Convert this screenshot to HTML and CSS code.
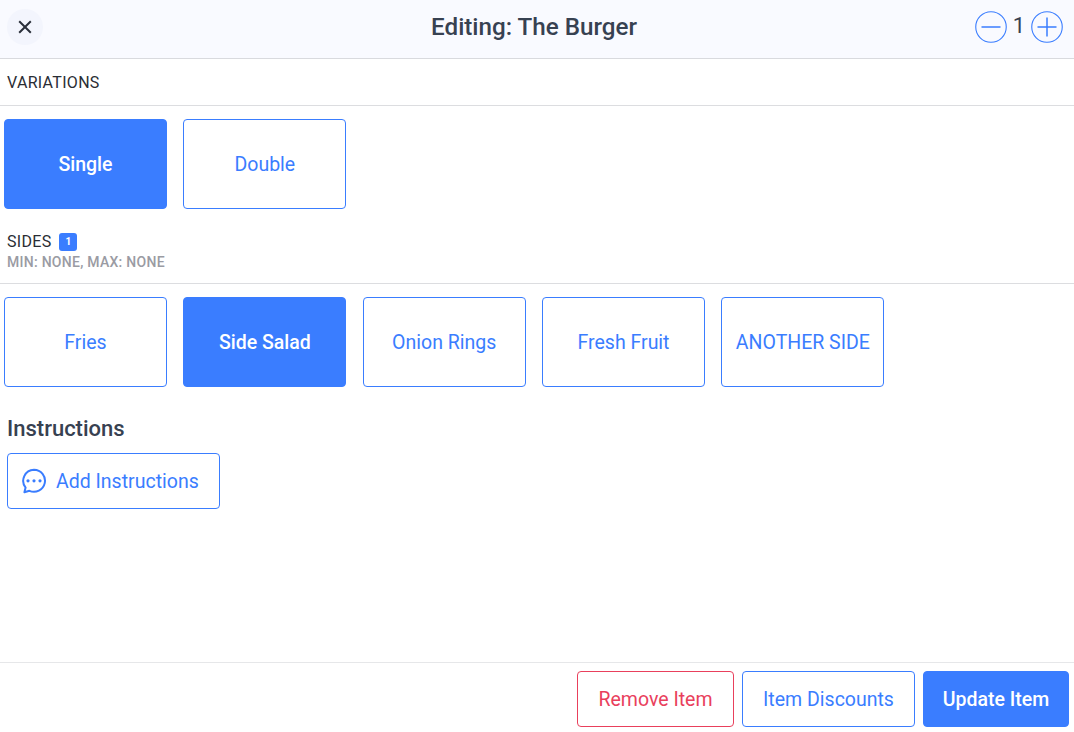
FILE: index.html
```html
<!DOCTYPE html>
<html lang="en">
<head>
    <meta charset="UTF-8">
    <meta name="viewport" content="width=device-width, initial-scale=1.0">
    <title>Editing: The Burger</title>
    <link rel="stylesheet" href="styles.css">
</head>
<body>
    <header class="top-bar">
        <button class="close-btn" aria-label="Close">
            <svg width="14" height="14" viewBox="0 0 14 14"><path d="M1.2 1.2l11.6 11.6M12.8 1.2l-11.6 11.6" fill="none" stroke="#2a2f3a" stroke-width="2"/></svg>
        </button>
        <h1 class="title">Editing: The Burger</h1>
        <div class="qty">
            <button class="qty-btn" aria-label="Decrease">
                <svg width="32" height="32" viewBox="0 0 32 32"><circle cx="16" cy="16" r="15.25" fill="none" stroke="#3a7dff" stroke-width="1.1"/><path d="M6.5 16h19" stroke="#3a7dff" stroke-width="1.5"/></svg>
            </button>
            <span class="qty-value">1</span>
            <button class="qty-btn" aria-label="Increase">
                <svg width="32" height="32" viewBox="0 0 32 32"><circle cx="16" cy="16" r="15.25" fill="none" stroke="#3a7dff" stroke-width="1.1"/><path d="M6.5 16h19M16 6.5v19" stroke="#3a7dff" stroke-width="1.5"/></svg>
            </button>
        </div>
    </header>

    <main class="content">
        <div class="group-head group-head-first">
            <div class="group-name">VARIATIONS</div>
        </div>
        <div class="options">
            <button class="btn option btn-solid">Single</button>
            <button class="btn option">Double</button>
        </div>

        <div class="group-head group-head-sides">
            <div class="group-name">SIDES <span class="badge">1</span></div>
            <div class="group-limits">MIN: NONE, MAX: NONE</div>
        </div>
        <div class="options">
            <button class="btn option">Fries</button>
            <button class="btn option btn-solid">Side Salad</button>
            <button class="btn option">Onion Rings</button>
            <button class="btn option">Fresh Fruit</button>
            <button class="btn option">ANOTHER SIDE</button>
        </div>

        <section class="instructions">
            <h2>Instructions</h2>
            <button class="btn add-btn">
                <svg width="26" height="26" viewBox="0 0 26 26"><path d="M13 1.8a11 11 0 1 1-4.6 21l-5 1.4 1.2-4.6A11 11 0 0 1 13 1.8z" fill="none" stroke="#3a7dff" stroke-width="2" stroke-linejoin="round"/><circle cx="7" cy="12.8" r="1.6" fill="#3a7dff"/><circle cx="13" cy="12.8" r="1.6" fill="#3a7dff"/><circle cx="19" cy="12.8" r="1.6" fill="#3a7dff"/></svg>
                Add Instructions
            </button>
        </section>
    </main>

    <footer class="actions">
        <button class="btn action btn-danger">Remove Item</button>
        <button class="btn action action-discounts">Item Discounts</button>
        <button class="btn action action-update btn-solid">Update Item</button>
    </footer>
</body>
</html>
```

FILE: styles.css
```css
* {
    box-sizing: border-box;
}
html, body {
    height: 100%;
}
body {
    margin: 0;
    height: 732px;
    overflow: hidden;
    display: flex;
    flex-direction: column;
    font-family: Roboto, Arial, sans-serif;
    background-color: #ffffff;
    color: #374151;
}
button {
    font-family: inherit;
    cursor: pointer;
}
.top-bar {
    height: 59px;
    flex: none;
    display: flex;
    align-items: center;
    justify-content: space-between;
    padding: 0 11px 5px 7px;
    background-color: #f9faff;
    border-bottom: 1px solid #d9dade;
    position: relative;
}
.close-btn {
    width: 36px;
    height: 36px;
    padding: 0;
    border: none;
    border-radius: 50%;
    background-color: #f3f5fd;
    display: flex;
    align-items: center;
    justify-content: center;
}
.title {
    position: absolute;
    left: 0;
    right: 6px;
    top: 12px;
    margin: 0;
    font-size: 24.2px;
    line-height: 30px;
    font-weight: 500;
    text-align: center;
}
.qty {
    display: flex;
    align-items: center;
}
.qty-btn {
    width: 32px;
    height: 32px;
    padding: 0;
    border: none;
    background: none;
    display: block;
}
.qty-btn svg {
    display: block;
}
.qty-value {
    width: 24px;
    text-align: center;
    font-size: 22px;
    margin-top: -2px;
}
.content {
    flex: 1;
}
.group-head {
    padding: 0 7px;
    border-bottom: 1px solid #dcdde0;
}
.group-head-first {
    height: 47px;
    padding-top: 14px;
}
.group-head-sides {
    height: 63px;
    margin-top: 12px;
    padding-top: 11px;
}
.group-name {
    font-size: 16px;
    line-height: 19px;
    letter-spacing: 0.3px;
    color: #2a2d34;
    display: flex;
    align-items: center;
    gap: 8px;
}
.badge {
    width: 18px;
    height: 18px;
    border-radius: 3px;
    background-color: #3a7dff;
    color: #ffffff;
    font-size: 10px;
    font-weight: 700;
    line-height: 18px;
    text-align: center;
}
.group-limits {
    font-size: 14px;
    line-height: 16px;
    letter-spacing: 0.27px;
    margin-top: 3px;
    font-weight: 500;
    color: #9a9ba3;
}
.options {
    display: flex;
    gap: 16.35px;
    padding: 13px 4px 0;
}
.btn {
    border: 1px solid #3a7dff;
    border-radius: 4px;
    background-color: #ffffff;
    color: #3a7dff;
    font-size: 19.5px;
}
.btn-solid {
    background-color: #3a7dff;
    color: #ffffff;
    font-weight: 500;
}
.option {
    width: 163px;
    height: 90px;
    padding: 0;
}
.instructions {
    padding: 27px 7px 0;
}
.instructions h2 {
    margin: 0 0 10px;
    font-size: 22px;
    line-height: 29px;
    font-weight: 500;
}
.add-btn {
    width: 213px;
    height: 56px;
    padding: 0 0 0 13px;
    display: flex;
    align-items: center;
    gap: 9px;
}
.actions {
    height: 70px;
    flex: none;
    display: flex;
    justify-content: flex-end;
    gap: 8px;
    padding: 8px 5px 0 0;
    border-top: 1px solid #e6e7e9;
}
.action {
    width: 157px;
    height: 56px;
    padding: 0;
}
.btn-danger {
    border-color: #e9405c;
    color: #e9405c;
}
.action-discounts {
    width: 173px;
}
.action-update {
    width: 146px;
}
```
